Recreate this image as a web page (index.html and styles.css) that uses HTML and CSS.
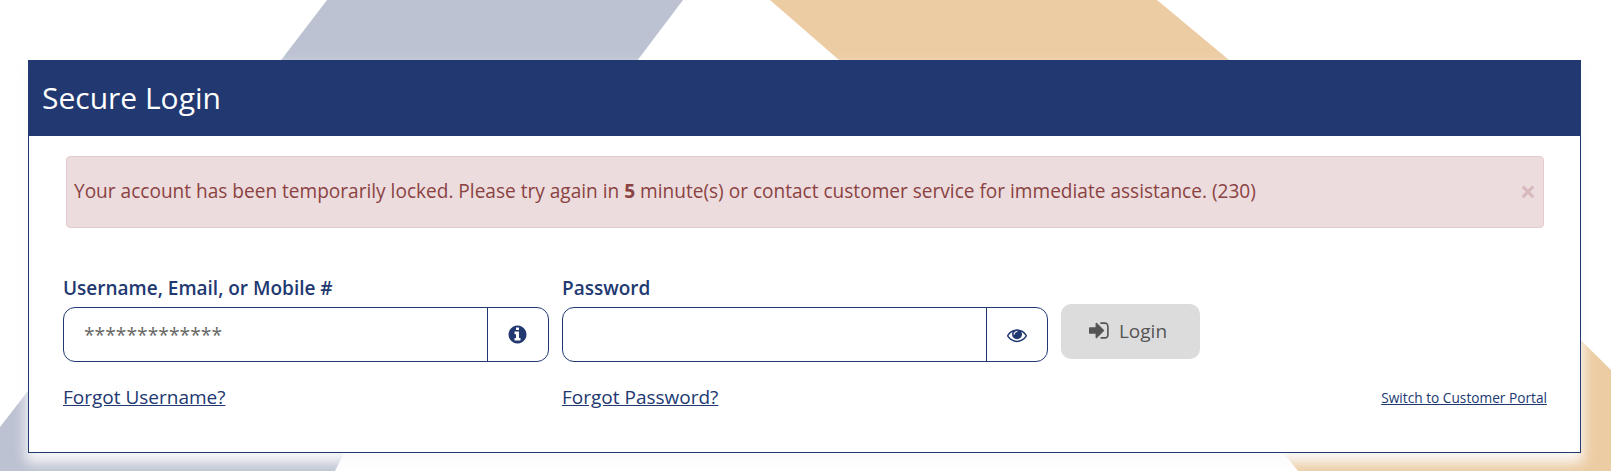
FILE: index.html
```html
<!DOCTYPE html>
<html lang="en">
<head>
<meta charset="UTF-8">
<meta name="viewport" content="width=device-width, initial-scale=1.0">
<title>Secure Login</title>
<link rel="stylesheet" href="styles.css">
</head>
<body>
  <!-- page backdrop shapes -->
  <svg class="backdrop" viewBox="0 0 1611 471" aria-hidden="true">
    <polygon class="shape-blue" points="327,0 683,0 600,110 243,110"/>
    <polygon class="shape-orange" points="770,0 1157,0 1277,100 885,100"/>
    <polygon class="shape-blue" points="100,298 0,427 0,471 335,471 400,341"/>
    <polygon class="shape-orange" points="1240,400 1500,260 1611,370 1611,471 1298,471"/>
  </svg>

  <div class="card">
    <div class="card-header">Secure Login</div>
    <div class="card-body">
      <div class="alert">
        <span>Your account has been temporarily locked. Please try again in <b>5</b> minute(s) or contact customer service for immediate assistance. (230)</span>
        <span class="alert-close">&times;</span>
      </div>

      <form class="login-form">
        <div class="form-row">
          <div class="field">
            <label for="username">Username, Email, or Mobile #</label>
            <div class="input-group">
              <input type="text" id="username" value="*************">
              <span class="input-addon">
                <svg class="icon" viewBox="0 0 1792 1792"><path d="M1152 1376v-160q0-14-9-23t-23-9h-96v-512q0-14-9-23t-23-9h-320q-14 0-23 9t-9 23v160q0 14 9 23t23 9h96v320h-96q-14 0-23 9t-9 23v160q0 14 9 23t23 9h448q14 0 23-9t9-23zm-128-896v-160q0-14-9-23t-23-9h-192q-14 0-23 9t-9 23v160q0 14 9 23t23 9h192q14 0 23-9t9-23zm640 416q0 209-103 385.5t-279.5 279.5-385.5 103-385.5-103-279.5-279.5-103-385.5 103-385.5 279.5-279.5 385.5-103 385.5 103 279.5 279.5 103 385.5z"/></svg>
              </span>
            </div>
          </div>
          <div class="field">
            <label for="password">Password</label>
            <div class="input-group">
              <input type="password" id="password">
              <span class="input-addon">
                <svg class="icon icon-eye" viewBox="0 0 1792 1792"><path d="M1664 960q-152-236-381-353 61 104 61 225 0 185-131.5 316.5t-316.5 131.5-316.5-131.5-131.5-316.5q0-121 61-225-229 117-381 353 133 205 333.5 326.5t434.5 121.5 434.5-121.5 333.5-326.5zm-720-384q0-20-14-34t-34-14q-125 0-214.5 89.5t-89.5 214.5q0 20 14 34t34 14 34-14 14-34q0-86 61-147t147-61q20 0 34-14t14-34zm848 384q0 34-20 69-140 230-376.5 368.5t-499.5 138.5-499.5-139-376.5-368q-20-35-20-69t20-69q140-229 376.5-368t499.5-139 499.5 139 376.5 368q20 35 20 69z"/></svg>
              </span>
            </div>
          </div>
          <button type="button" class="btn-login">
            <svg class="icon-login" viewBox="0 0 1792 1792"><path d="M1184 896q0 26-19 45l-544 544q-19 19-45 19t-45-19-19-45v-288h-448q-26 0-45-19t-19-45v-384q0-26 19-45t45-19h448v-288q0-26 19-45t45-19 45 19l544 544q19 19 19 45zm352-352v704q0 119-84.5 203.5t-203.5 84.5h-320q-13 0-22.5-9.5t-9.5-22.5q0-4-1-20t-.5-26.5 3-23.5 10-19.5 20.5-6.5h320q66 0 113-47t47-113v-704q0-66-47-113t-113-47h-288-11-13-15l-11-1-11.5-3-8-5.5-6.5-9-2-13.5q0-4-1-20t-.5-26.5 3-23.5 10-19.5 20.5-6.5h320q119 0 203.5 84.5t84.5 203.5z"/></svg>
            Login
          </button>
        </div>
        <div class="link-row">
          <a class="link-col" href="#">Forgot Username?</a>
          <a class="link-col" href="#">Forgot Password?</a>
          <a class="link-small" href="#">Switch to Customer Portal</a>
        </div>
      </form>
    </div>
  </div>
</body>
</html>
```

FILE: styles.css
```css
/* Basic styling */
html, body {
  margin: 0;
  height: 100%;
  background: #fff;
  overflow: hidden;
}
body {
  font-family: "Open Sans", "Liberation Sans", sans-serif;
  font-size: 19px;
  color: #213871;
}
.backdrop {
  position: absolute;
  top: 0;
  left: 0;
  width: 1611px;
  height: 471px;
}
.shape-blue {
  fill: #bcc2d2;
}
.shape-orange {
  fill: #eccca3;
}

/* Card */
.card {
  position: relative;
  box-sizing: border-box;
  width: 1553px;
  height: 393px;
  margin: 60px 0 0 28px;
  background: #fff;
  border: 1px solid #213871;
  box-shadow: 0 8px 12px 2px rgba(250, 250, 250, 0.95);
}
.card-header {
  margin: -1px -1px 0;
  height: 76px;
  padding-left: 14px;
  background: #213871;
  color: #fff;
  font-size: 30px;
  line-height: 75px;
}
.card-body {
  padding: 20px 33px 0 34px;
}

/* Alert */
.alert {
  display: flex;
  justify-content: space-between;
  align-items: center;
  box-sizing: border-box;
  height: 72px;
  margin: 0 3px;
  padding: 0 7px 3px 7px;
  background: #eddcdd;
  border: 1px solid #e4cbcf;
  border-radius: 4px;
  color: #8a4242;
  font-size: 19.07px;
}
.alert-close {
  color: #d8b9bd;
  font-size: 28px;
  font-weight: 700;
  line-height: 1;
}

/* Form */
.login-form {
  margin-top: 45px;
}
.form-row {
  display: flex;
  gap: 13px;
  align-items: flex-start;
}
.field {
  width: 486px;
}
.field label {
  display: block;
  height: 34px;
  font-weight: 600;
  font-size: 19px;
  line-height: 30px;
}
.input-group {
  display: flex;
  box-sizing: border-box;
  height: 55px;
  border: 1px solid #213871;
  border-radius: 12px;
  background: #fff;
}
.input-group input {
  flex: 1;
  min-width: 0;
  padding: 0 20px;
  border: none;
  outline: none;
  background: transparent;
  border-radius: 12px 0 0 12px;
  font-family: inherit;
  font-size: 19.3px;
  color: #666;
}
.input-addon {
  display: flex;
  align-items: center;
  justify-content: center;
  box-sizing: border-box;
  width: 61px;
  padding-right: 1px;
  border-left: 1px solid #213871;
}
.icon {
  width: 21px;
  height: 21px;
  fill: #213871;
}
.icon-eye {
  width: 20px;
  height: 20px;
}
.btn-login {
  display: flex;
  align-items: center;
  justify-content: center;
  gap: 7px;
  box-sizing: border-box;
  width: 139px;
  height: 55px;
  margin-top: 31px;
  padding: 0 5px 2px 0;
  border: none;
  border-radius: 10px;
  background: #dcdcdc;
  color: #555;
  font-family: inherit;
  font-size: 19px;
}
.icon-login {
  width: 23px;
  height: 23px;
  fill: #555;
}

/* Links */
.link-row {
  display: flex;
  gap: 13px;
  align-items: center;
  margin-top: 22px;
}
.link-row a {
  color: #213871;
}
.link-col {
  width: 486px;
  font-size: 19px;
}
.link-small {
  margin-left: auto;
  font-size: 13.7px;
  padding-top: 1px;
}
```
